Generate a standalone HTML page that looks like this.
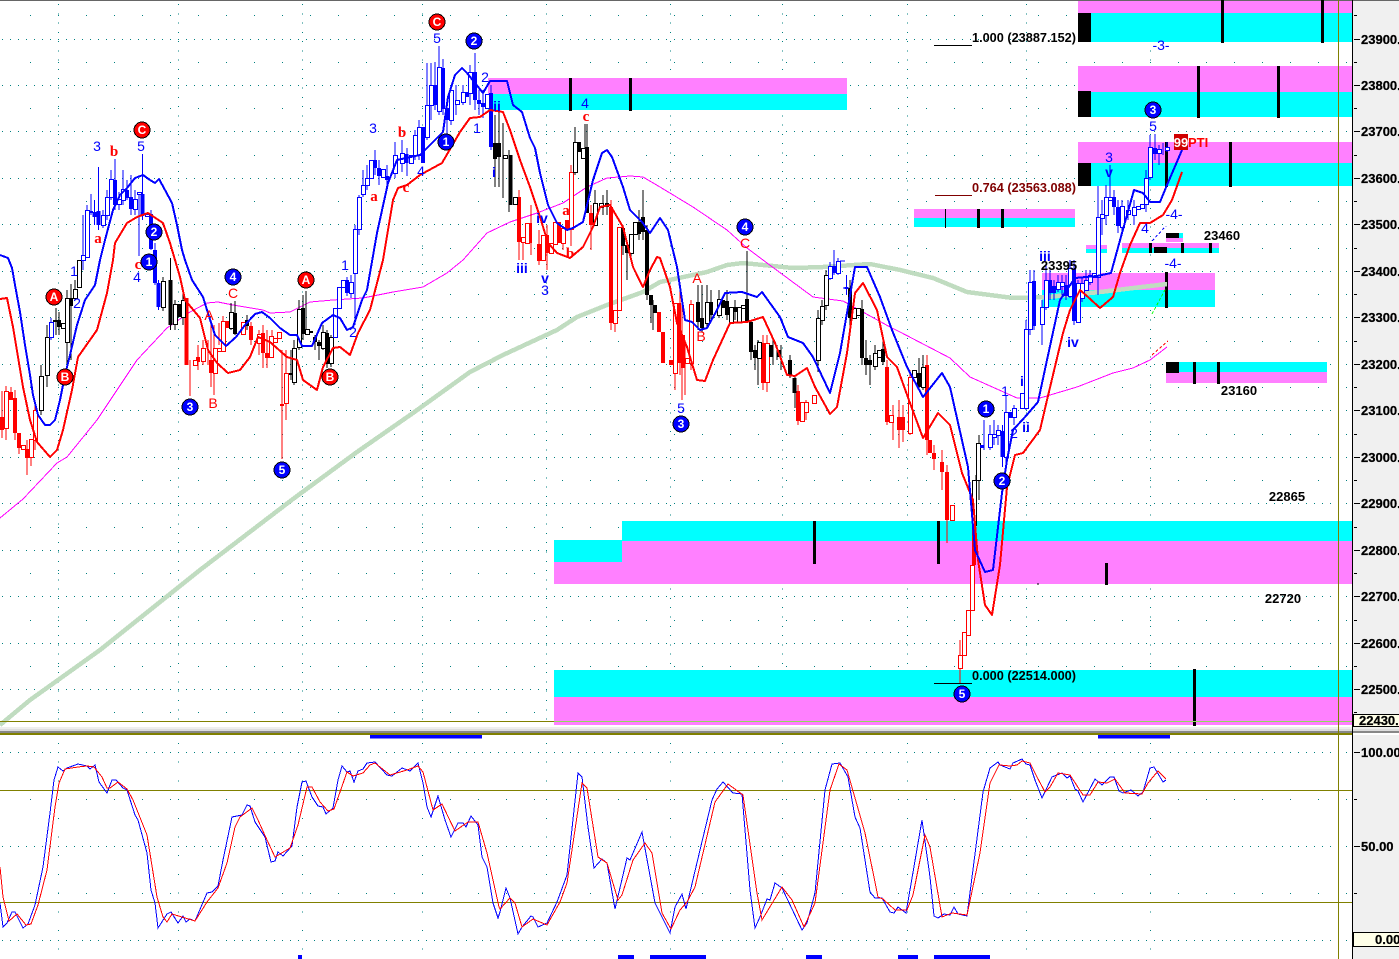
<!DOCTYPE html>
<html><head><meta charset="utf-8"><title>Chart</title>
<style>
html,body{margin:0;padding:0;background:#fff;width:1399px;height:959px;overflow:hidden}
svg{display:block}
svg *{shape-rendering:crispEdges}
text{font:14px "Liberation Sans",sans-serif;text-anchor:middle}
.s{font:bold 15px "Liberation Serif",serif}
.bd{font-weight:bold}
.t{font:bold 13px "Liberation Sans",sans-serif}
.l{text-anchor:start}
.c{font:bold 12px "Liberation Sans",sans-serif;fill:#fff}
.ax{font:bold 13px "Liberation Sans",sans-serif;text-anchor:start;fill:#000;stroke:#000;stroke-width:.25}
.bl{fill:#00f}.rd{fill:#f00}
</style></head><body>
<svg width="1399" height="959" viewBox="0 0 1399 959" xmlns="http://www.w3.org/2000/svg">
<rect width="1399" height="959" fill="#fff"/>
<rect x="0" y="0" width="1399" height="1" fill="#666"/>

<!-- grid -->
<g fill="none" stroke="#008080" stroke-width="1">
<path stroke-dasharray="1 7" d="M2 39.5H1352M2 85.5H1352M2 131.5H1352M2 178.5H1352M2 224.5H1352M2 271.5H1352M2 317.5H1352M2 364.5H1352M2 410.5H1352M2 457.5H1352M2 503.5H1352M2 550.5H1352M2 596.5H1352M2 643.5H1352M2 689.5H1352M2 752.5H1352M2 846.5H1352M2 940.5H1352"/>
<path stroke-dasharray="1 8.28" d="M58.5 4V727M178.5 4V727M302.5 4V727M422.5 4V727M546.5 4V727M670.5 4V727M782.5 4V727M907.5 4V727M1026.5 4V727M1150.5 4V727"/>
<path stroke-dasharray="1 17.7" d="M58.5 743V959M178.5 743V959M302.5 743V959M422.5 743V959M546.5 743V959M670.5 743V959M782.5 743V959M907.5 743V959M1026.5 743V959M1150.5 743V959"/>
<path stroke-dasharray="1 27" d="M30 15.5H1352M30 62.5H1352M30 108.5H1352M30 155.5H1352M30 201.5H1352M30 248.5H1352M30 294.5H1352M30 341.5H1352M30 387.5H1352M30 434.5H1352M30 480.5H1352M30 527.5H1352M30 573.5H1352M30 620.5H1352M30 666.5H1352M30 712.5H1352M30 799.5H1352M30 893.5H1352"/>
</g>

<!-- bands -->
<g>
<rect x="1078" y="1" width="274" height="12" fill="#ff80ff"/><rect x="1078" y="13" width="274" height="29" fill="#0ff"/><rect x="1078" y="13" width="13" height="29" fill="#000"/>
<rect x="1078" y="66" width="274" height="26" fill="#ff80ff"/><rect x="1078" y="92" width="274" height="25" fill="#0ff"/><rect x="1078" y="91" width="13" height="26" fill="#000"/>
<rect x="1078" y="142" width="274" height="21" fill="#ff80ff"/><rect x="1078" y="163" width="274" height="23" fill="#0ff"/><rect x="1078" y="163" width="13" height="23" fill="#000"/>
<rect x="488" y="78" width="359" height="16" fill="#ff80ff"/><rect x="488" y="94" width="359" height="16" fill="#0ff"/>
<rect x="914" y="209" width="161" height="9" fill="#ff80ff"/><rect x="914" y="218" width="161" height="9" fill="#0ff"/>
<rect x="1086" y="245" width="21" height="4" fill="#ff80ff"/><rect x="1086" y="249" width="21" height="4" fill="#0ff"/>
<rect x="1122" y="243" width="97" height="5" fill="#ff80ff"/><rect x="1122" y="248" width="97" height="5" fill="#0ff"/><rect x="1154" y="247" width="13" height="6" fill="#000"/>
<rect x="1179" y="233" width="4" height="5" fill="#0ff"/><rect x="1166" y="238" width="17" height="4" fill="#ff80ff"/><rect x="1166" y="233" width="13" height="5" fill="#000"/>
<rect x="1042" y="273" width="173" height="17" fill="#ff80ff"/><rect x="1042" y="290" width="173" height="17" fill="#0ff"/>
<rect x="1166" y="362" width="161" height="10" fill="#0ff"/><rect x="1166" y="372" width="161" height="11" fill="#ff80ff"/><rect x="1166" y="362" width="13" height="11" fill="#000"/>
<rect x="622" y="521" width="730" height="20" fill="#0ff"/><rect x="554" y="540" width="68" height="22" fill="#0ff"/><rect x="622" y="541" width="730" height="43" fill="#ff80ff"/><rect x="554" y="562" width="68" height="22" fill="#ff80ff"/>
<rect x="554" y="670" width="798" height="27" fill="#0ff"/><rect x="554" y="697" width="798" height="28" fill="#ff80ff"/>
<path stroke="#000" stroke-width="3" fill="none" d="M1222.5 0V43M1322.5 0V43M1198.5 66V118M1278.5 66V118M1166.5 142V187M1230.5 142V187M570.5 78V111M630.5 78V111M978.5 209V228M1002.5 209V228M1150.5 243V253M1182.5 243V253M1210.5 243V253M1166.5 272V308M1194.5 362V384M1218.5 362V384M814.5 521V564M938.5 521V564M1106.5 563V585M1194.5 669V726"/>
<path stroke="#000" stroke-width="1" fill="none" d="M945.5 209V228M1037 584h2"/>
</g>

<!-- MA lines -->
<polyline fill="none" stroke="#c0dcc0" stroke-width="4.5" points="0,725 30,700 100,650 200,570 293,499 357,452 413,413 470,372 503,355 557,330 577,317 607,305 643,292 660,282 707,272 727,265 743,263 793,268 823,267 870,264 900,270 933,278 967,292 1013,298 1047,297 1100,292 1167,284"/>
<polyline fill="none" stroke="#f0f" stroke-width="1" points="0,518 23,499 57,463 67,457 97,420 115,393 137,360 167,328 190,312 207,303 218,302 233,305 263,310 270,313 290,312 310,302 333,300 363,298 393,292 423,287 447,273 463,260 487,233 510,222 537,213 563,203 587,187 607,178 630,176 643,177 660,187 693,207 727,230 747,248 767,263 813,297 843,301 890,327 900,332 950,358 970,377 1017,398 1040,398 1077,387 1113,373 1133,368 1150,360 1167,347"/>

<!-- red candles -->
<g>
<path fill="none" stroke="#f00" d="M2 391V438M6 386V440M11 387V400M15 390V440M19 433V454M27 440V475M31 439V466M35 405V450M190 360V396M198 345V370M203 340V365M208 340V365M211 325V387M214 325V395M219 323V345M223 316V350M251 322V345M259 330V355M263 325V368M267 330V368M272 330V358M282 350V459M286 350V420M519 190V260M523 237V260M531 205V255M539 230V265M547 225V270M563 228V250M571 165V246M591 205V250M611 200V330M615 310V332M675 303V390M680 290V375M682 300V400M685 345V395M691 300V370M763 335V390M767 335V392M798 385V425M806 400V420M887 360V425M893 405V440M899 400V448M903 405V442M910 370V435M927 355V455M934 445V470M942 450V490M947 465V543M960 640V684"/>
<path fill="none" stroke="#f00" stroke-width="4" d="M2 417V430M11 392V400M15 398V433M19 433V448M27 449V458M186.5 298V365M198 357V362M211 360V373M227 321V328M251 326V340M263 333V353M267 353V358M282 404V406M519 197V242M530 223V243M539 244V261M547 235V253M559 222V243M567 220V229M591 213V225M611 207V323M659 312V332M663 332V363M671 360V365M679 303V363M683 335V368M763 343V383M798 391V421M887 367V422M899 417V430M903 417V430M927 365V440M930 440V453M934 453V459M942 462V472M947 472V520M974 525V565"/>
<path fill="#fff" stroke="#f00" d="M4.5 391.5h4v37h-4zM21.5 445.5h4v4h-4zM29.5 439.5h4v18h-4zM33.5 410.5h4v30h-4zM193.5 360.5h4v5h-4zM201.5 348.5h4v13h-4zM213.5 348.5h4v25h-4zM217.5 348.5h4v3h-4zM221.5 321.5h4v30h-4zM241.5 322.5h4v12h-4zM257.5 334.5h4v9h-4zM269.5 336.5h4v21h-4zM273.5 338.5h4v4h-4zM277.5 332.5h4v6h-4zM284.5 373.5h4v30h-4zM521.5 237.5h4v5h-4zM525.5 223.5h4v20h-4zM541.5 235.5h4v25h-4zM549.5 243.5h4v10h-4zM553.5 222.5h4v22h-4zM561.5 228.5h4v15h-4zM569.5 172.5h4v57h-4zM613.5 310.5h4v13h-4zM617.5 227.5h4v83h-4zM673.5 303.5h4v70h-4zM685.5 358.5h4v5h-4zM689.5 304.5h4v59h-4zM765.5 343.5h4v39h-4zM800.5 402.5h4v19h-4zM804.5 402.5h4v10h-4zM812.5 395.5h4v8h-4zM889.5 415.5h4v7h-4zM908.5 377.5h4v56h-4zM950.5 505.5h4v15h-4zM958.5 655.5h4v13h-4zM962.5 632.5h4v23h-4zM966.5 610.5h4v25h-4zM970.5 565.5h4v45h-4z"/>
</g>
<!-- black candles -->
<g>
<path fill="none" stroke="#000" d="M41 365V415M47 325V387M56 308V335M59 312V335M67 290V365M71 284V360M75 280V300M163 277V311M170.5 258V330M175 300V330M183 290V325M231 303V330M235 301V335M247 315V330M291 350V380M294 340V385M299 300V350M303 295V340M306 291V335M315 335V350M319 340V360M323 325V350M327 330V368M331 335V367M495 115V187M499 105V187M503 123V198M509 150V212M575 127V175M585 124V150M587 124V213M595 190V225M607 190V215M603 195V215M623 225V255M627 240V280M631 235V260M639 210V240M643 190V240M647 225V300M653 300V330M651 295V323M698 285V330M702 285V332M707 285V328M711 290V320M719 290V318M727 290V320M735 300V320M747 251V322M751 320V360M755 345V370M758 340V385M773 340V365M777 345V360M781 345V370M790 355V378M795 375V408M818 310V372M822 300V325M826 270V310M850 280V325M862 300V365M866 340V375M870 355V385M875 345V370M883 340V365M919 358V390M923 355V390M979 435V500M976 475V520"/>
<path fill="none" stroke="#000" stroke-width="4" d="M55 320V322M59 320V327M71 298V306M170.5 280V325M179 304V317M235 313V334M247 320V326M291 373V375M303 308V334M311 331V333M315 337V342M319 342V346M327 333V364M495 143V159M499 143V157M510.5 155V205M579 142V152M587 147V213M607 203V207M623 228V246M627 245V253M639 222V234M643 217V232M647 230V295M651 295V305M655 305V313M698 302V322M702 318V328M711 302V315M723 300V308M727 301V315M735 307V312M747 299V322M751 322V352M755 350V358M771 345V357M779 350V357M790 360V376M794.5 378V393M850 288V318M862 309V358M866 358V365M870 360V365M883 349V362M919 373V387"/>
<path fill="#fff" stroke="#000" d="M39.5 376.5h4v34h-4zM45.5 337.5h4v38h-4zM61.5 323.5h4v5h-4zM65.5 298.5h4v44h-4zM73.5 289.5h4v9h-4zM77.5 260.5h4v27h-4zM161.5 281.5h4v26h-4zM173.5 304.5h4v20h-4zM181.5 300.5h4v17h-4zM229.5 312.5h4v16h-4zM292.5 348.5h4v34h-4zM297.5 309.5h4v38h-4zM305.5 329.5h4v5h-4zM321.5 332.5h4v16h-4zM329.5 337.5h4v26h-4zM513.5 197.5h4v7h-4zM503.5 155.5h4v3h-4zM573.5 142.5h4v30h-4zM581.5 148.5h4v10h-4zM593.5 203.5h4v22h-4zM599.5 203.5h4v4h-4zM629.5 234.5h4v19h-4zM633.5 222.5h4v12h-4zM705.5 302.5h4v21h-4zM717.5 299.5h4v16h-4zM729.5 307.5h4v15h-4zM737.5 307.5h4v15h-4zM741.5 305.5h4v3h-4zM757.5 342.5h4v16h-4zM816.5 318.5h4v42h-4zM820.5 306.5h4v14h-4zM824.5 275.5h4v30h-4zM852.5 308.5h4v10h-4zM856.5 308.5h4v7h-4zM873.5 353.5h4v13h-4zM877.5 350.5h4v7h-4zM912.5 370.5h4v7h-4zM921.5 367.5h4v20h-4zM976.5 443.5h4v37h-4zM972.5 480.5h4v45h-4z"/>
</g>
<!-- blue candles -->
<g>
<path fill="none" stroke="#00f" d="M51 318V340M83 215V270M87 205V258M91 194V215M94.5 200V225M98.5 167V230M103 210V228M107 190V220M111 170V200M115 159V210M119 192V210M123 170V205M127 180V200M131 175V215M135 190V215M139 193V256M142.5 154V220M151 210V250M155 243V285M158.5 280V310M347 277V296M351 275V298M355 225V325M359 195V235M363 170V197M367 165V190M375 150V175M379 160V185M387 165V185M395 142V178M402 140V172M407 148V176M415 130V160M419 120V160M427 63V140M431 63V120M435 62V110M439 46V115M443 59V115M447 100V135M451 85V125M456 85V115M463 85V105M470 65V105M475 53V110M479 90V115M483 90V118M491 85V150M984 420V450M990 425V450M994 420V445M998 425V445M1002.5 425V467M1006 395V465M1014 405V425M1026 320V410M1030 270V335M1034 270V330M1042 300V345M1046 265V310M1050 270V300M1054 280V300M1058 275V292M1062 275V295M1066 275V300M1070 260V298M1074 260V325M1078 280V323M1082 278V302M1086 270V290M1090 270V285M1098 186V295M1102 200V235M1106 185V225M1110 165V200M1114 190V215M1118 200V233M1122 200V230M1128 200V220M1134 200V225M1146 170V212M1150 135V180M1155 134V160M1159 145V165M1163 143V155M1167 142V152M830 262V280M834 250V275M838 258V275M846.5 275V295"/>
<path fill="none" stroke="#00f" stroke-width="4" d="M91 211V213M94.5 212V217M98.5 211V225M115 180V205M127 190V198M131 197V209M142.5 194V216M151 214V249M155 250V283M158.5 283V307M347 280V293M375 160V168M379 168V176M387 176V180M406.5 154V163M423 127V163M435 85V105M443 68V109M447 108V120M467 92V97M475 72V100M479 100V104M483 103V107M491 93V147M834 266V273M846.5 287V289M982 445V448M1002.5 431V457M1010 412V418M1034 281V326M1050 280V293M1054 286V293M1066 285V296M1074 269V321M1114 197V207M1118 207V226M1155 148V154"/>
<path fill="#fff" stroke="#00f" d="M49.5 322.5h4v15h-4zM81.5 255.5h4v5h-4zM85.5 210.5h4v47h-4zM101.5 215.5h4v10h-4zM105.5 197.5h4v18h-4zM109.5 179.5h4v18h-4zM117.5 199.5h4v5h-4zM121.5 189.5h4v11h-4zM133.5 199.5h4v10h-4zM137.5 192.5h4v2h-4zM145.5 214.5h4v2h-4zM333.5 308.5h4v29h-4zM337.5 287.5h4v21h-4zM341.5 280.5h4v7h-4zM349.5 282.5h4v11h-4zM353.5 229.5h4v44h-4zM357.5 197.5h4v32h-4zM361.5 185.5h4v9h-4zM365.5 178.5h4v7h-4zM369.5 160.5h4v18h-4zM381.5 169.5h4v8h-4zM393.5 155.5h4v18h-4zM400.5 153.5h4v10h-4zM409.5 155.5h4v8h-4zM413.5 135.5h4v20h-4zM417.5 127.5h4v28h-4zM425.5 105.5h4v32h-4zM429.5 85.5h4v20h-4zM437.5 67.5h4v44h-4zM449.5 90.5h4v30h-4zM455.5 100.5h4v4h-4zM461.5 92.5h4v10h-4zM468.5 72.5h4v21h-4zM485.5 94.5h4v14h-4zM988.5 434.5h4v13h-4zM992.5 434.5h4v3h-4zM996.5 430.5h4v5h-4zM1004.5 412.5h4v45h-4zM1012.5 408.5h4v9h-4zM1020.5 393.5h4v15h-4zM1024.5 329.5h4v79h-4zM1028.5 282.5h4v47h-4zM1040.5 307.5h4v17h-4zM1044.5 280.5h4v27h-4zM1056.5 282.5h4v7h-4zM1060.5 282.5h4v4h-4zM1068.5 268.5h4v28h-4zM1076.5 283.5h4v39h-4zM1080.5 283.5h4v15h-4zM1084.5 280.5h4v10h-4zM1088.5 275.5h4v7h-4zM1092.5 273.5h4v4h-4zM1096.5 217.5h4v60h-4zM1100.5 214.5h4v4h-4zM1104.5 197.5h4v18h-4zM1108.5 197.5h4v3h-4zM1120.5 206.5h4v21h-4zM1126.5 210.5h4v4h-4zM1132.5 207.5h4v8h-4zM1136.5 206.5h4v3h-4zM1140.5 204.5h4v4h-4zM1144.5 178.5h4v26h-4zM1148.5 147.5h4v30h-4zM1157.5 149.5h4v4h-4zM1165.5 147.5h4v3h-4zM828.5 266.5h4v12h-4zM836.5 261.5h4v12h-4z"/>
<path fill="none" stroke="#00f" d="M840 261h5M843 288h4"/>
</g>

<!-- band lines -->
<polyline fill="none" stroke="#f00" stroke-width="2" stroke-linejoin="round" points="0,299 7,298 13,327 23,387 30,420 37,442 50,457 57,450 63,430 72,390 78,357 97,330 107,293 113,260 115,243 127,223 137,217 148,213 163,223 170,243 180,277 185,300 200,318 208,350 217,363 228,373 240,370 250,357 258,337 270,342 287,357 297,360 303,380 317,390 323,367 333,348 340,347 350,355 358,333 370,310 383,260 393,200 398,188 407,185 420,175 442,163 460,132 470,118 480,117 490,110 503,112 510,130 520,160 530,187 540,217 548,243 557,253 570,258 583,247 593,227 600,207 610,205 623,227 633,267 643,287 650,270 657,257 660,258 670,287 677,323 687,347 697,380 705,381 713,360 730,323 747,322 763,317 775,343 787,375 795,376 807,368 815,387 830,414 837,407 847,353 855,293 863,283 877,310 887,357 897,367 910,403 923,438 938,413 950,425 962,473 973,500 978,560 985,605 992,615 1000,565 1007,487 1015,455 1023,453 1040,430 1047,400 1063,333 1070,310 1080,290 1088,297 1100,308 1113,297 1120,273 1130,245 1140,223 1150,223 1163,215 1172,200 1182,172"/>
<polyline fill="none" stroke="#00f" stroke-width="2" stroke-linejoin="round" points="0,255 8,258 12,268 15,285 20,312 25,345 30,375 33,395 38,415 45,425 50,425 55,420 60,400 65,375 70,355 77,325 85,300 95,285 100,260 105,240 113,210 120,195 127,188 135,178 143,175 150,180 155,183 159,179 165,190 172,203 177,225 182,250 185,260 192,280 203,297 207,310 215,335 226,346 236,337 245,325 255,314 262,312 270,318 280,328 290,335 297,335 302,346 312,346 322,323 333,315 340,318 347,330 353,327 362,300 367,290 377,233 388,183 397,160 420,155 433,142 443,132 448,97 455,75 462,68 467,73 483,93 490,81 507,81 513,105 522,112 530,138 535,148 540,173 548,205 557,223 567,230 573,228 583,222 593,180 602,153 607,150 612,157 623,187 630,210 642,222 650,233 660,218 668,230 677,267 685,320 692,322 700,330 707,328 717,310 725,293 742,292 757,297 762,292 780,317 788,337 803,343 813,357 830,393 840,353 855,267 867,267 880,297 892,330 907,367 923,397 942,373 950,387 968,467 975,550 985,572 993,570 1002,493 1007,460 1013,430 1025,417 1038,402 1047,360 1060,300 1075,278 1097,276 1111,273 1122,233 1134,190 1143,193 1150,202 1160,202 1167,185 1182,150"/>

<!-- cross-hatch -->
<g fill="none" stroke-width="1">
<path stroke="#00f" stroke-dasharray="3 2" d="M1152 241L1166 226"/><path stroke="#0f0" stroke-dasharray="3 2" d="M1152 314L1166 288"/><path stroke="#f00" stroke-dasharray="3 2" d="M1152 355L1168 341"/>
</g>

<!-- fib -->
<g>
<path d="M934 45.5H972M934 683.5H972" stroke="#000" fill="none"/><path d="M935 195.5H972" stroke="#800000" fill="none"/>
<text class="t l" x="972" y="42" textLength="104" lengthAdjust="spacingAndGlyphs">1.000 (23887.152)</text>
<text class="t l" x="972" y="192" textLength="104" lengthAdjust="spacingAndGlyphs" fill="#800000">0.764 (23563.088)</text>
<text class="t l" x="972" y="680" textLength="104" lengthAdjust="spacingAndGlyphs">0.000 (22514.000)</text>
<text class="t" x="1059" y="270">23395</text><text class="t" x="1222" y="240">23460</text><text class="t" x="1239" y="395">23160</text><text class="t" x="1287" y="501">22865</text><text class="t" x="1283" y="603">22720</text>
</g>

<!-- wave labels -->
<g>
<text class="bl" x="97" y="151">3</text><text class="bl" x="141" y="151">5</text><text class="bl" x="137" y="282">4</text><text class="bl" x="74" y="276">1</text><text class="bl" x="77" y="308">2</text><text class="bl" x="345" y="270">1</text><text class="bl" x="353" y="337">2</text><text class="bl" x="373" y="133">3</text><text class="bl" x="421" y="176">4</text><text class="bl" x="437" y="43">5</text><text class="bl" x="485" y="82">2</text><text class="bl" x="477" y="133">1</text><text class="bl" x="585" y="108">4</text><text class="bl" x="545" y="295">3</text><text class="bl" x="681" y="413">5</text><text class="bl" x="1005" y="396">1</text><text class="bl" x="1014" y="438">2</text><text class="bl" x="1109" y="162">3</text><text class="bl" x="1145" y="233">4</text><text class="bl" x="1153" y="131">5</text>
<text class="bl" x="1161" y="50">-3-</text><text class="bl" x="1174" y="219">-4-</text><text class="bl" x="1173" y="268">-4-</text>
<text class="bl bd" x="497" y="111">ii</text><text class="bl bd" x="494" y="177">i</text><text class="bl bd" x="542" y="223">iv</text><text class="bl bd" x="522" y="273">iii</text><text class="bl bd" x="545" y="283">v</text><text class="bl bd" x="1022" y="386">i</text><text class="bl bd" x="1026" y="432">ii</text><text class="bl bd" x="1045" y="261">iii</text><text class="bl bd" x="1073" y="347">iv</text><text class="bl bd" x="1109" y="177">v</text>
</g>
<g>
<text class="s rd" x="114" y="156">b</text><text class="s rd" x="98" y="243">a</text><text class="s rd" x="138" y="269">c</text><text class="s rd" x="402" y="137">b</text><text class="s rd" x="374" y="201">a</text><text class="s rd" x="406" y="192">c</text><text class="s rd" x="566" y="215">a</text><text class="s rd" x="570" y="258">b</text><text class="s rd" x="586" y="121">c</text>
<text class="rd" x="209" y="320">A</text><text class="rd" x="213" y="408">B</text><text class="rd" x="233" y="298">C</text><text class="rd" x="697" y="283">A</text><text class="rd" x="701" y="341">B</text><text class="rd" x="745" y="248">C</text>
</g>

<!-- circles -->
<g stroke="#000" stroke-width="1">
<circle cx="437" cy="22" r="8" fill="#f00"/><circle cx="142" cy="130" r="8" fill="#f00"/><circle cx="54" cy="297" r="8" fill="#f00"/><circle cx="306" cy="280" r="8" fill="#f00"/><circle cx="65" cy="377" r="8" fill="#f00"/><circle cx="330" cy="377" r="8" fill="#f00"/>
<circle cx="474" cy="41" r="8" fill="#00f"/><circle cx="446" cy="142" r="8" fill="#00f"/><circle cx="154" cy="232" r="8" fill="#00f"/><circle cx="149" cy="262" r="8" fill="#00f"/><circle cx="233" cy="277" r="8" fill="#00f"/><circle cx="190" cy="407" r="8" fill="#00f"/><circle cx="282" cy="470" r="8" fill="#00f"/><circle cx="745" cy="227" r="8" fill="#00f"/><circle cx="681" cy="424" r="8" fill="#00f"/><circle cx="986" cy="409" r="8" fill="#00f"/><circle cx="1002" cy="481" r="8" fill="#00f"/><circle cx="962" cy="694" r="8" fill="#00f"/><circle cx="1153" cy="110" r="8" fill="#00f"/>
</g>
<g>
<text class="c" x="437" y="26">C</text><text class="c" x="142" y="134">C</text><text class="c" x="54" y="301">A</text><text class="c" x="306" y="284">A</text><text class="c" x="65" y="381">B</text><text class="c" x="330" y="381">B</text>
<text class="c" x="474" y="45">2</text><text class="c" x="446" y="146">1</text><text class="c" x="154" y="236">2</text><text class="c" x="149" y="266">1</text><text class="c" x="233" y="281">4</text><text class="c" x="190" y="411">3</text><text class="c" x="282" y="474">5</text><text class="c" x="745" y="231">4</text><text class="c" x="681" y="428">3</text><text class="c" x="986" y="413">1</text><text class="c" x="1002" y="485">2</text><text class="c" x="962" y="698">5</text><text class="c" x="1153" y="114">3</text>
</g>

<!-- PTI -->
<rect x="1174" y="134" width="14" height="16" fill="#d00000"/>
<text class="t" x="1181" y="147" fill="#fff">99</text>
<text class="t l" x="1188" y="147" fill="#f00">PTI</text>

<!-- separators -->
<g>
<rect x="0" y="721" width="1352" height="1" fill="#808000"/>
<rect x="554" y="721" width="798" height="1" fill="#8fdc5a"/>
<rect x="0" y="727" width="1399" height="2" fill="#eee"/>
<rect x="0" y="729" width="1399" height="2" fill="#ddd"/>
<rect x="0" y="731" width="1399" height="2" fill="#888"/>
<rect x="0" y="733" width="1352" height="2" fill="#808000"/>
<rect x="370" y="735" width="112" height="3.5" fill="#00f"/><rect x="1098" y="735" width="72" height="3.5" fill="#00f"/>
<rect x="0" y="790" width="1352" height="1" fill="#808000"/><rect x="0" y="902" width="1352" height="1" fill="#808000"/>
<rect x="1338" y="0" width="1" height="959" fill="#808000"/>
<rect x="298" y="955" width="4" height="4" fill="#00f"/><rect x="618" y="955" width="16" height="4" fill="#00f"/><rect x="650" y="955" width="56" height="4" fill="#00f"/><rect x="806" y="955" width="16" height="4" fill="#00f"/><rect x="898" y="955" width="20" height="4" fill="#00f"/><rect x="934" y="955" width="56" height="4" fill="#00f"/>
</g>

<!-- stochastics -->
<polyline fill="none" stroke="#00f" stroke-width="1" points="0,903 3,927 7,923 12,912 15,912 23,928 28,924 35,905 43,867 50,813 54,780 58,767 63,771 67,768 78,764 87,766 90,769 95,765 99,782 107,793 112,780 116,780 123,788 127,790 135,815 138,820 147,853 151,890 155,903 158,928 167,914 171,912 178,923 183,916 186,922 190,919 195,921 207,893 212,892 218,886 223,860 232,817 242,815 247,805 250,806 255,822 265,837 271,862 275,861 278,852 283,856 292,846 297,807 302,782 306,781 312,797 318,806 323,807 326,814 333,808 338,780 342,766 347,772 350,771 354,782 358,771 363,769 367,763 375,762 387,775 392,776 402,768 410,771 418,763 423,783 427,807 431,817 438,796 445,820 451,837 458,823 463,823 466,827 471,816 478,825 482,857 487,867 493,903 498,918 500,912 506,888 510,898 518,934 522,927 531,916 533,917 538,927 547,923 557,902 567,875 578,773 582,777 588,827 594,868 602,859 607,863 615,909 627,858 630,860 642,832 655,903 670,933 675,907 682,894 686,909 700,850 712,800 717,789 723,782 733,793 742,794 750,890 755,928 760,917 767,899 770,900 775,883 782,888 802,930 807,923 815,893 825,790 832,764 840,763 848,777 855,817 860,828 870,892 875,898 882,898 890,912 894,913 898,907 906,913 922,820 930,877 934,916 938,918 944,914 950,915 954,907 958,914 967,916 983,792 990,768 998,762 1000,765 1010,769 1013,763 1022,759 1026,764 1030,765 1035,780 1042,798 1052,777 1062,773 1067,778 1070,776 1075,789 1078,791 1083,802 1095,779 1102,785 1110,777 1114,777 1119,791 1123,793 1131,790 1138,796 1143,792 1150,768 1154,767 1163,782 1166,780"/>
<polyline fill="none" stroke="#f00" stroke-width="1" points="0,867 3,897 9,921 17,914 26,925 31,924 38,905 47,870 55,807 59,783 65,769 78,767 87,766 94,767 102,777 107,788 110,788 118,782 127,789 133,800 147,835 157,897 163,917 167,922 172,914 195,921 207,902 218,888 227,863 235,827 240,817 252,808 258,820 267,840 275,857 290,848 298,825 307,787 312,787 320,802 328,811 334,809 340,792 347,772 353,776 363,773 370,765 375,763 390,775 407,770 418,766 423,772 433,810 442,804 455,831 468,822 478,822 487,853 499,907 500,909 510,898 515,903 522,927 533,919 547,925 560,902 567,883 582,783 587,788 598,857 607,863 618,900 622,895 633,860 645,843 652,853 662,913 671,929 680,910 687,902 695,887 715,802 728,784 743,795 757,893 762,920 782,887 792,900 804,927 815,903 830,790 839,764 847,770 865,833 878,897 883,899 895,910 907,910 913,895 925,835 930,847 942,917 952,913 967,915 980,853 990,783 999,765 1000,765 1010,766 1017,765 1022,761 1030,763 1037,777 1045,792 1050,787 1058,773 1070,775 1083,795 1090,795 1098,782 1107,783 1115,779 1125,793 1142,794 1148,783 1158,771 1166,779"/>

<!-- right axis -->
<rect x="1353" y="1" width="46" height="726" fill="#f0f0f0"/>
<rect x="1353" y="735" width="46" height="224" fill="#f0f0f0"/>
<rect x="1352" y="0" width="1" height="959" fill="#000"/>
<path fill="none" stroke="#000" d="M1354 39.5h6M1354 85.5h6M1354 131.5h6M1354 178.5h6M1354 224.5h6M1354 271.5h6M1354 317.5h6M1354 364.5h6M1354 410.5h6M1354 457.5h6M1354 503.5h6M1354 550.5h6M1354 596.5h6M1354 643.5h6M1354 689.5h6M1354 752.5h6M1354 846.5h6M1354 799.5h3M1354 893.5h3M1354 15.5h3M1354 62.5h3M1354 108.5h3M1354 155.5h3M1354 201.5h3M1354 248.5h3M1354 294.5h3M1354 341.5h3M1354 387.5h3M1354 434.5h3M1354 480.5h3M1354 527.5h3M1354 573.5h3M1354 620.5h3M1354 666.5h3M1354 712.5h3"/>
<g>
<text class="ax" x="1361" y="44">23900.</text><text class="ax" x="1361" y="90">23800.</text><text class="ax" x="1361" y="136">23700.</text><text class="ax" x="1361" y="183">23600.</text><text class="ax" x="1361" y="229">23500.</text><text class="ax" x="1361" y="276">23400.</text><text class="ax" x="1361" y="322">23300.</text><text class="ax" x="1361" y="369">23200.</text><text class="ax" x="1361" y="415">23100.</text><text class="ax" x="1361" y="462">23000.</text><text class="ax" x="1361" y="508">22900.</text><text class="ax" x="1361" y="555">22800.</text><text class="ax" x="1361" y="601">22700.</text><text class="ax" x="1361" y="648">22600.</text><text class="ax" x="1361" y="694">22500.</text>
<text class="ax" x="1361" y="757">100.00</text><text class="ax" x="1361" y="851">50.00</text>
</g>
<rect x="1353.5" y="714.5" width="46" height="12" fill="#ffffe8" stroke="#000"/>
<text class="ax" x="1359" y="725">22430.</text>
<rect x="1353.5" y="932.5" width="46" height="14" fill="#ffffe8" stroke="#000"/>
<text class="ax" x="1375" y="944">0.00</text>
</svg>
</body></html>
